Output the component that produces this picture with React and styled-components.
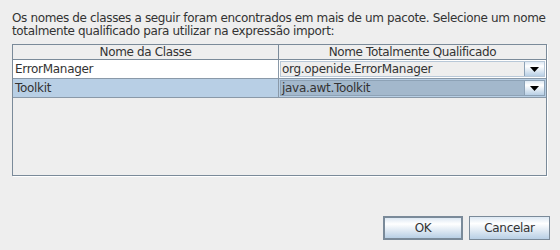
import React from "react";
import styled, { createGlobalStyle } from "styled-components";

const GlobalStyle = createGlobalStyle`
  html, body {
    margin: 0;
    padding: 0;
    background: #eeeeee;
  }
  body {
    font-family: "DejaVu Sans", "Liberation Sans", sans-serif;
    font-size: 12px;
    color: #333333;
  }
`;

const Dialog = styled.div`
  width: 560px;
  height: 250px;
  box-sizing: border-box;
  padding: 12px 10px 10px 12px;
  display: flex;
  flex-direction: column;
  background: #eeeeee;
`;

const Message = styled.div`
  line-height: 13px;
  letter-spacing: -0.36px;
  white-space: nowrap;
`;

const TableFrame = styled.div`
  margin-top: 6px;
  width: 535px;
  height: 132px;
  box-sizing: border-box;
  border: 1px solid #7a8a99;
  box-shadow: 1px 1px 0 #ffffff;
  background: #eeeeee;
`;

const Row = styled.div`
  display: grid;
  grid-template-columns: 266px 1fr;
  height: ${p => (p.header ? "14px" : "18px")};
  border-bottom: 1px solid ${p => (p.header ? "#7a8a99" : "#8a99a8")};
  background: ${p => (p.header ? "#eeeeee" : p.selected ? "#b8cfe5" : "#ffffff")};
`;

const HeaderCell = styled.div`
  display: flex;
  align-items: center;
  justify-content: center;
  border-right: 1px solid #7a8a99;
  letter-spacing: -0.36px;
  line-height: 14px;
  &:last-child {
    border-right: none;
  }
`;

const Cell = styled.div`
  display: flex;
  align-items: center;
  padding-left: 2px;
  border-right: 1px solid #8a99a8;
  letter-spacing: -0.3px;
  &:last-child {
    border-right: none;
    padding: 1px;
  }
`;

const Combo = styled.div`
  flex: 1;
  height: 16px;
  display: flex;
  box-sizing: border-box;
  border: 1px solid ${p => (p.selected ? "#8da2b6" : "#b8c8d8")};
  background: ${p => (p.selected ? "#a3b8cc" : "#eeeeee")};
`;

const ComboText = styled.div`
  flex: 1;
  padding-left: 1px;
  line-height: 14px;
  letter-spacing: -0.3px;
`;

const ArrowButton = styled.div`
  width: 19px;
  display: flex;
  align-items: center;
  justify-content: center;
  border-left: 1px solid #8da2b6;
  background: linear-gradient(#dde8f3 0%, #ffffff 30%, #b8cfe5 100%);
`;

const Footer = styled.div`
  margin-top: auto;
  display: flex;
  justify-content: flex-end;
  gap: 6px;
`;

const Button = styled.button`
  width: ${p => (p.primary ? "80px" : "81px")};
  height: 24px;
  box-sizing: border-box;
  border: ${p => (p.primary ? "2px solid #7a8a99" : "1px solid #7a8a99")};
  background: linear-gradient(#dde8f3 0%, #ffffff 30%, #b8cfe5 100%);
  font-family: "DejaVu Sans", "Liberation Sans", sans-serif;
  font-size: 12px;
  color: #333333;
  letter-spacing: -0.3px;
  padding: 0;
`;

const Arrow = () => (
  <svg width="9" height="5" viewBox="0 0 9 5">
    <polygon points="0,0 9,0 4.5,5" fill="#000000" />
  </svg>
);

const rows = [
  { name: "ErrorManager", fq: "org.openide.ErrorManager", selected: false },
  { name: "Toolkit", fq: "java.awt.Toolkit", selected: true }
];

export default function App() {
  return (
    <Dialog>
      <GlobalStyle />
      <Message>
        Os nomes de classes a seguir foram encontrados em mais de um pacote. Selecione um nome
        <br />
        totalmente qualificado para utilizar na expressão import:
      </Message>
      <TableFrame>
        <Row header>
          <HeaderCell>Nome da Classe</HeaderCell>
          <HeaderCell>Nome Totalmente Qualificado</HeaderCell>
        </Row>
        {rows.map(r => (
          <Row key={r.name} selected={r.selected}>
            <Cell>{r.name}</Cell>
            <Cell>
              <Combo selected={r.selected}>
                <ComboText>{r.fq}</ComboText>
                <ArrowButton>
                  <Arrow />
                </ArrowButton>
              </Combo>
            </Cell>
          </Row>
        ))}
      </TableFrame>
      <Footer>
        <Button primary>OK</Button>
        <Button>Cancelar</Button>
      </Footer>
    </Dialog>
  );
}
